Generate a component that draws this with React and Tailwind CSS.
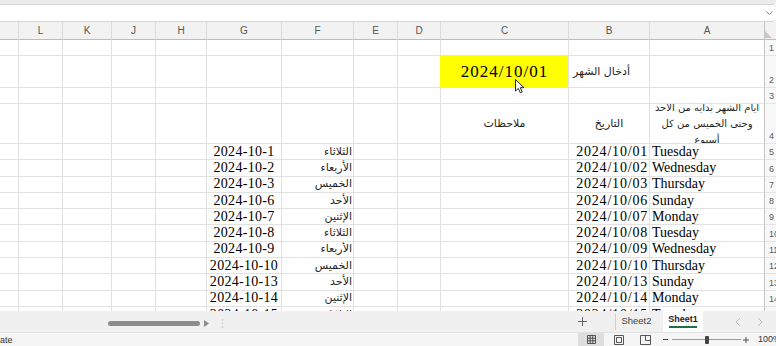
import React from 'react';
import clsx from 'clsx';

// RTL sheet: first column in the template is the row header on the right
const GRID = 'grid grid-cols-[12px_115px_81px_128px_43px_44px_72px_75px_51px_44px_49px_44px_18px]';
const COLS = ['A', 'B', 'C', 'D', 'E', 'F', 'G', 'H', 'J', 'K', 'L', 'M'];

const serif = "font-['Liberation_Serif',serif] text-[14px] leading-[16px] text-black whitespace-nowrap";
const arabic = "font-['DejaVu_Sans',sans-serif] text-[11px] leading-[16px] text-[#1f1f1f] whitespace-nowrap";
const ui = "font-['Liberation_Sans',sans-serif]";

const days = [
  ['2024/10/01', 'Tuesday', 'الثلاثاء', '2024-10-1'],
  ['2024/10/02', 'Wednesday', 'الأربعاء', '2024-10-2'],
  ['2024/10/03', 'Thursday', 'الخميس', '2024-10-3'],
  ['2024/10/06', 'Sunday', 'الأحد', '2024-10-6'],
  ['2024/10/07', 'Monday', 'الإثنين', '2024-10-7'],
  ['2024/10/08', 'Tuesday', 'الثلاثاء', '2024-10-8'],
  ['2024/10/09', 'Wednesday', 'الأربعاء', '2024-10-9'],
  ['2024/10/10', 'Thursday', 'الخميس', '2024-10-10'],
  ['2024/10/13', 'Sunday', 'الأحد', '2024-10-13'],
  ['2024/10/14', 'Monday', 'الإثنين', '2024-10-14'],
  ['2024/10/15', 'Tuesday', 'الثلاثاء', '2024-10-15'],
];

function Row({ n, h, cells = {}, extra = {}, partial = false }) {
  return (
    <div className={clsx(GRID, h)}>
      <div dir="ltr" className="flex flex-col justify-end overflow-hidden border-l border-b border-l-[#c4c4c4] border-b-[#e4e4e4] bg-[#f8f8f8] pl-[4px] pb-[1px]">
        {!partial && (
          <span className={clsx(ui, 'text-[9px] leading-[11px] text-[#5b5b5b] whitespace-nowrap')}>{n}</span>
        )}
      </div>
      {COLS.map((c) => (
        <div
          key={c}
          className={clsx(
            'flex flex-col overflow-hidden border-[#e2e2e2]',
            partial ? 'justify-start' : 'justify-center border-b',
            c !== 'M' && 'border-l',
            extra[c]
          )}
        >
          {cells[c]}
        </div>
      ))}
    </div>
  );
}

function HeaderRow() {
  return (
    <div className={clsx(GRID, 'h-[18px] bg-[#f2f2f2]')}>
      <div className="flex items-end justify-end border-l border-b border-l-[#c4c4c4] border-b-[#bdbdbd] pb-[1px]">
        <svg width="9" height="7" viewBox="0 0 9 7" className="mr-[2px]">
          <polygon points="0,0 0,7 7,7" fill="#c9c9c9" />
        </svg>
      </div>
      {COLS.map((c) => (
        <div
          key={c}
          className={clsx(
            ui,
            'flex items-center justify-center border-b border-b-[#bdbdbd] text-[10px] text-[#555]',
            c !== 'M' && 'border-l border-l-[#dcdcdc]'
          )}
        >
          {c === 'M' ? '' : c}
        </div>
      ))}
    </div>
  );
}

function dayCells(d) {
  return {
    A: <div dir="ltr" className={clsx(serif, 'text-left pl-[2px]')}>{d[1]}</div>,
    B: <div dir="ltr" className={clsx(serif, 'text-right pr-[1px] tracking-[0.8px]')}>{d[0]}</div>,
    F: <div className={clsx(arabic, 'text-right pr-[1px]')}>{d[2]}</div>,
    G: <div dir="ltr" className={clsx(serif, 'text-center tracking-[0.3px]')}>{d[3]}</div>,
  };
}

function Sheet() {
  const last = days[days.length - 1];
  return (
    <div dir="rtl" className="h-[289px] overflow-hidden">
      <HeaderRow />
      <Row n={1} h="h-[16px]" />
      <Row
        n={2}
        h="h-[32px]"
        extra={{ C: 'bg-[#ffff00] border-l-[#ffff00]' }}
        cells={{
          B: <div className={clsx(arabic, 'text-left pl-[4px]')}>أدخال الشهر</div>,
          C: (
            <div dir="ltr" className="text-center font-['Liberation_Serif',serif] text-[17px] leading-[20px] tracking-[1px] text-black">
              2024/10/01
            </div>
          ),
        }}
      />
      <Row n={3} h="h-[16px]" />
      <Row
        n={4}
        h="h-[40px]"
        cells={{
          A: (
            <div className="font-['DejaVu_Sans',sans-serif] text-[10px] leading-[16px] text-[#1f1f1f] whitespace-nowrap text-center">
              <div>ايام الشهر  بدايه من الاحد</div>
              <div>وحتى الخميس من كل</div>
              <div>أسبوع</div>
            </div>
          ),
          B: <div className={clsx(arabic, 'text-center')}>التاريخ</div>,
          C: <div className={clsx(arabic, 'text-center')}>ملاحظات</div>,
        }}
      />
      {days.slice(0, -1).map((d, i) => (
        <Row key={d[0]} n={i + 5} h="h-[16.3px]" cells={dayCells(d)} />
      ))}
      {/* row 15 only shows its top edge above the tab bar */}
      <Row n={15} h="h-[6px]" partial cells={dayCells(last)} />
    </div>
  );
}

function TabBar() {
  return (
    <div dir="ltr" className="flex h-[21px] items-center bg-[#f0f0f0]">
      <div className="w-[108px] shrink-0" />
      <div className="mt-[3px] h-[5px] w-[92px] shrink-0 rounded-full bg-[#8c8c8c]" />
      <div className="w-[4px] shrink-0" />
      <svg width="5" height="7" viewBox="0 0 5 7" className="mt-[3px] shrink-0">
        <polygon points="0,0 5,3.5 0,7" fill="#8c8c8c" />
      </svg>
      <div className="w-[12px] shrink-0" />
      <svg width="3" height="9" viewBox="0 0 3 9" className="mt-[3px] shrink-0">
        <circle cx="1.5" cy="1" r="0.8" fill="#c4c4c4" />
        <circle cx="1.5" cy="4.5" r="0.8" fill="#c4c4c4" />
        <circle cx="1.5" cy="8" r="0.8" fill="#c4c4c4" />
      </svg>
      <div className="w-[346px] shrink-0" />
      <div className="flex w-[24px] shrink-0 justify-center">
        <svg width="9" height="9" viewBox="0 0 9 9">
          <path d="M4.5 0v9M0 4.5h9" stroke="#666" strokeWidth="1" />
        </svg>
      </div>
      <div className="w-[21px] shrink-0" />
      <div className="h-[16px] w-px shrink-0 bg-[#cfcfcf]" />
      <div className={clsx(ui, 'w-[41px] shrink-0 text-center text-[9.5px] text-[#444]')}>Sheet2</div>
      <div className="w-[6px] shrink-0" />
      <div className="flex h-full w-[40px] shrink-0 flex-col items-center bg-white pt-[2px]">
        <span className={clsx(ui, 'text-[9px] leading-[12px] font-bold text-[#1e1e1e]')}>Sheet1</span>
        <div className="mt-[1px] h-[2px] w-[28px] bg-[#1e7145]" />
      </div>
      <div className="w-[32px] shrink-0" />
      <svg width="6" height="10" viewBox="0 0 6 10" className="shrink-0">
        <path d="M5 1L1 5l4 4" stroke="#bcbcbc" fill="none" strokeWidth="1" />
      </svg>
      <div className="w-[16px] shrink-0" />
      <svg width="6" height="10" viewBox="0 0 6 10" className="shrink-0">
        <path d="M1 1l4 4-4 4" stroke="#bcbcbc" fill="none" strokeWidth="1" />
      </svg>
    </div>
  );
}

function StatusBar() {
  return (
    <div dir="ltr" className="flex h-[14px] items-center border-t border-[#e2e2e2] bg-[#f5f5f5]">
      <div className={clsx(ui, 'w-[578px] shrink-0 text-[9px] leading-[12px] text-[#333]')}>ate</div>
      <div className="flex h-full w-[26px] shrink-0 items-center justify-center bg-[#dedede]">
        <svg width="9" height="9" viewBox="0 0 9 9">
          <path d="M0.5 0.5h8v8h-8zM3.2 0.5v8M5.8 0.5v8M0.5 3.2h8M0.5 5.8h8" stroke="#444" fill="none" strokeWidth="0.9" />
        </svg>
      </div>
      <div className="w-[10px] shrink-0" />
      <svg width="10" height="10" viewBox="0 0 10 10" className="shrink-0">
        <path d="M0.5 0.5h9v9h-9zM2.5 2.5h5v5h-5z" stroke="#444" fill="none" strokeWidth="0.9" />
      </svg>
      <div className="w-[16px] shrink-0" />
      <svg width="11" height="10" viewBox="0 0 11 10" className="shrink-0">
        <path d="M0.5 0.5h10v9h-10zM5.5 0.5v5h5" stroke="#444" fill="none" strokeWidth="0.9" />
      </svg>
      <div className="w-[12px] shrink-0" />
      <div className="h-px w-[5px] shrink-0 bg-[#444]" />
      <div className="w-[4px] shrink-0" />
      <div className="h-px w-[33px] shrink-0 bg-[#9a9a9a]" />
      <div className="h-[8px] w-[4px] shrink-0 rounded-[1px] bg-[#444]" />
      <div className="h-px w-[32px] shrink-0 bg-[#9a9a9a]" />
      <div className="w-[2px] shrink-0" />
      <svg width="6" height="6" viewBox="0 0 6 6" className="shrink-0">
        <path d="M3 0v6M0 3h6" stroke="#444" strokeWidth="0.9" />
      </svg>
      <div className="w-[9px] shrink-0" />
      <span className={clsx(ui, 'shrink-0 whitespace-nowrap text-[9px] text-[#333]')}>100%</span>
    </div>
  );
}

export default function App() {
  return (
    <div className="relative flex h-[346px] w-[776px] flex-col overflow-hidden bg-white">
      <div className="h-[4px] bg-[#ebebeb]" />
      <div className="flex h-[18px] items-center justify-end rounded-r-[4px] border-y border-[#d6d6d6] bg-white pr-[3px]">
        <svg width="7" height="4" viewBox="0 0 7 4">
          <path d="M0.5 0.5L3.5 3.5L6.5 0.5" stroke="#777" fill="none" strokeWidth="0.9" />
        </svg>
      </div>
      <Sheet />
      <TabBar />
      <StatusBar />
      {/* mouse pointer over C2 */}
      <svg width="10" height="15" viewBox="0 0 10 15" className="absolute left-[515px] top-[79px]">
        <path d="M0.5 0.5V12L3.3 9.4L5.3 13.8L7.2 13L5.3 8.7H9Z" fill="#fff" stroke="#111" strokeWidth="0.9" strokeLinejoin="round" />
      </svg>
    </div>
  );
}
